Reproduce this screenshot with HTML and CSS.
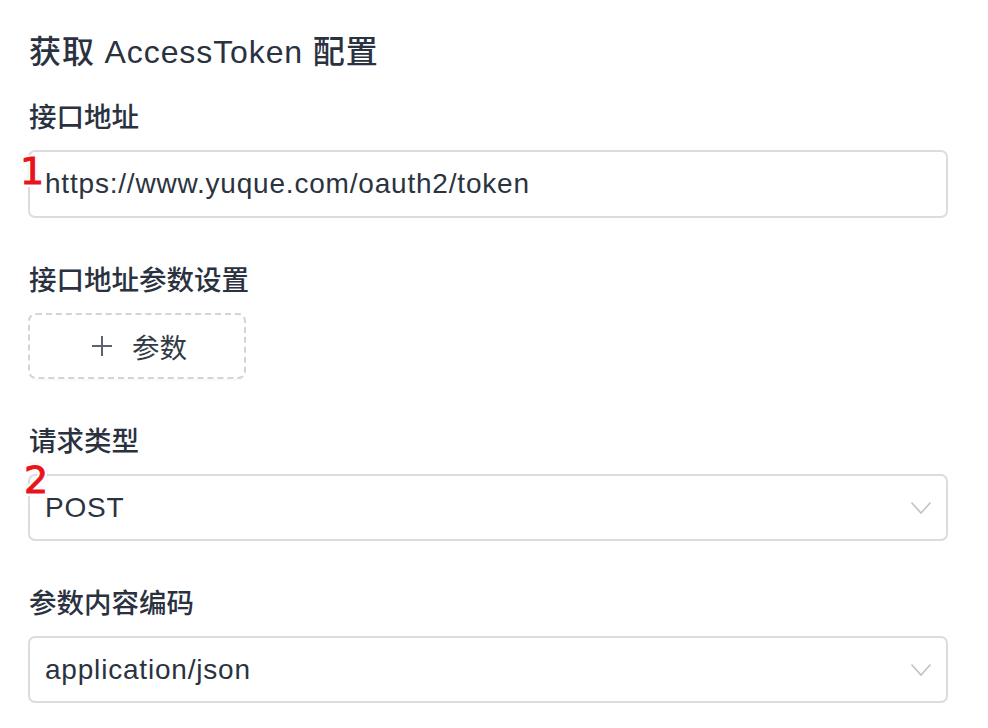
FILE: index.html
```html
<!DOCTYPE html>
<html lang="zh-CN">
<head>
<meta charset="utf-8">
<title>获取 AccessToken 配置</title>
<link rel="stylesheet" href="styles.css">
</head>
<body>
<div class="form">
  <h1 class="title">获取 AccessToken 配置</h1>

  <div class="field">
    <div class="label">接口地址</div>
    <div class="control">
      <div class="box input">https://www.yuque.com/oauth2/token</div>
      <span class="mark mark-1">1</span>
    </div>
  </div>

  <div class="field">
    <div class="label">接口地址参数设置</div>
    <div class="control">
      <button class="add-btn" type="button">
        <svg class="plus" width="22" height="22" viewBox="0 0 22 22" aria-hidden="true">
          <line x1="11" y1="1" x2="11" y2="21"/>
          <line x1="1" y1="11" x2="21" y2="11"/>
        </svg>
        <span>参数</span>
      </button>
    </div>
  </div>

  <div class="field">
    <div class="label">请求类型</div>
    <div class="control">
      <div class="box select">
        <span>POST</span>
        <svg class="chevron" width="22" height="14" viewBox="0 0 22 14" aria-hidden="true">
          <polyline points="1.5,1.5 11,12 20.5,1.5"/>
        </svg>
      </div>
      <span class="mark mark-2">2</span>
    </div>
  </div>

  <div class="field">
    <div class="label">参数内容编码</div>
    <div class="control">
      <div class="box select">
        <span>application/json</span>
        <svg class="chevron" width="22" height="14" viewBox="0 0 22 14" aria-hidden="true">
          <polyline points="1.5,1.5 11,12 20.5,1.5"/>
        </svg>
      </div>
    </div>
  </div>
</div>
</body>
</html>
```

FILE: styles.css
```css
html, body {
  margin: 0;
  padding: 0;
  background: #ffffff;
}

body {
  font-family: "Liberation Sans", "Noto Sans CJK SC", sans-serif;
  color: #2a323f;
}

.form {
  padding: 30px 40px 0 28px;
  display: flex;
  flex-direction: column;
}

.title {
  margin: 0 0 22px 1px;
  font-size: 32px;
  line-height: 44px;
  font-weight: 500;
  letter-spacing: 0.9px;
  color: #2a323f;
}

.field {
  display: flex;
  flex-direction: column;
  margin-bottom: 41px;
}

.label {
  font-size: 27.5px;
  line-height: 44px;
  font-weight: 500;
  letter-spacing: 0;
  margin: 0 0 10px 1px;
  color: #2a323f;
}

.control {
  position: relative;
}

.box {
  box-sizing: border-box;
  height: 67px;
  border: 2px solid #dcdce0;
  border-radius: 7px;
  padding: 0 14px 0 15px;
  display: flex;
  align-items: center;
  font-size: 28px;
  letter-spacing: 0.8px;
  color: #2b3340;
  background: #fff;
}

.input {
  height: 68px;
}

.select {
  justify-content: space-between;
}

.chevron {
  fill: none;
  stroke: #c2c2c6;
  stroke-width: 1.6;
}

.add-btn {
  box-sizing: border-box;
  width: 218px;
  height: 66px;
  border: 2px dashed #d3d3d8;
  border-radius: 8px;
  background: #fff;
  box-shadow: 0 2px 0 rgba(0, 0, 0, 0.02);
  display: flex;
  align-items: center;
  justify-content: center;
  gap: 19px;
  padding: 0 0 0 4px;
  font-family: "Liberation Sans", "Noto Sans CJK SC", sans-serif;
  font-size: 27.5px;
  color: #333a45;
  cursor: pointer;
}

.plus {
  stroke: #5b6270;
  stroke-width: 2;
}

.mark {
  position: absolute;
  font-family: "DejaVu Sans", sans-serif;
  font-size: 38px;
  line-height: 38px;
  font-weight: normal;
  color: #e8141c;
  -webkit-text-stroke: 1px #e8141c;
  text-shadow:
    2.5px 0 0 #fff, -2.5px 0 0 #fff, 0 2.5px 0 #fff, 0 -2.5px 0 #fff,
    2px 2px 0 #fff, -2px -2px 0 #fff, 2px -2px 0 #fff, -2px 2px 0 #fff,
    0 0 4px rgba(0, 0, 0, 0.3);
}

.mark-1 {
  left: -8px;
  top: 2px;
}

.mark-2 {
  left: -4px;
  top: -13px;
}
```
